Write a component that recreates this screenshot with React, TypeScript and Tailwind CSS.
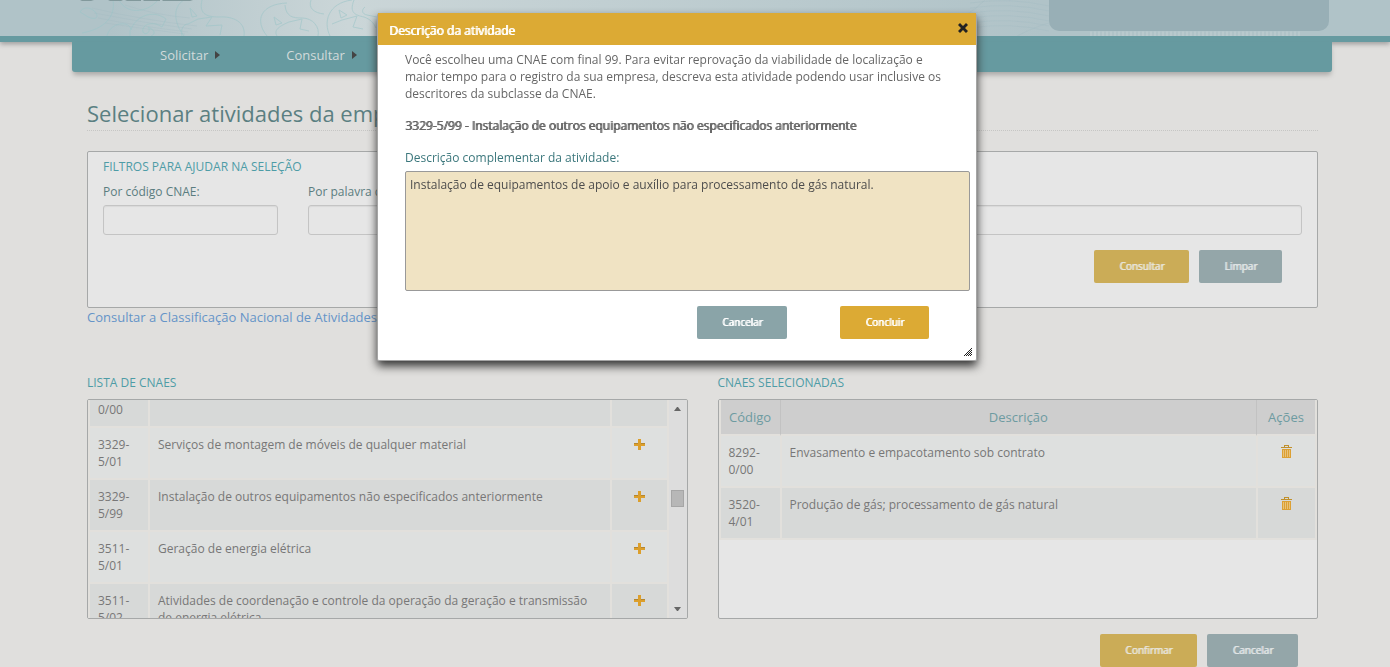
import React, { useState } from "react";
import { clsx } from "clsx";

interface Cnae {
  code: string;
  description: string;
}

const available: Cnae[] = [
  { code: "3329-5/01", description: "Serviços de montagem de móveis de qualquer material" },
  { code: "3329-5/99", description: "Instalação de outros equipamentos não especificados anteriormente" },
  { code: "3511-5/01", description: "Geração de energia elétrica" },
  {
    code: "3511-5/02",
    description: "Atividades de coordenação e controle da operação da geração e transmissão de energia elétrica",
  },
];

const selected: Cnae[] = [
  { code: "8292-0/00", description: "Envasamento e empacotamento sob contrato" },
  { code: "3520-4/01", description: "Produção de gás; processamento de gás natural" },
];

const cell = "border-b-2 border-l-2 border-[#e2e0dc] px-2 py-2 align-top";

const Button = ({ children, className }: { children: React.ReactNode; className: string }) => (
  <button
    type="button"
    className={clsx(
      "h-[33px] shrink-0 rounded-xs px-[25px] text-[10px] [text-shadow:1px_0_currentColor]",
      className
    )}
  >
    {children}
  </button>
);

const PlusIcon = () => (
  <svg width="11" height="11" viewBox="0 0 11 11" shapeRendering="crispEdges" aria-hidden="true">
    <path d="M4 0h3v4h4v3H7v4H4V7H0V4h4z" fill="#dc9f2c" />
    <path d="M0 4h4v1H0zM7 4h4v1H7z" fill="#b5862e" />
  </svg>
);

const TrashIcon = () => (
  <svg width="11" height="13" viewBox="0 0 11 13" shapeRendering="crispEdges" aria-hidden="true">
    <path d="M3 0h5v1H3zM3 1h1v1H3zM7 1h1v1H7zM0 2h11v1H0z" fill="#c0902c" />
    <path d="M1 4h9v9H1z" fill="#dca033" />
    <path d="M2 5h1v7H2zM4 5h1v7H4zM6 5h1v7H6zM8 5h1v7H8z" fill="#e8c27a" />
  </svg>
);

const HeaderArt = () => (
  <svg className="absolute inset-0 h-full w-full" viewBox="0 0 1390 36" preserveAspectRatio="none" aria-hidden="true">
    <g fill="none" stroke="#9dc6c9" strokeWidth="1" opacity="0.6">
      <path d="M80 12c3-6 12-5 16 1 4 8-6 6-11 2zM113 0c3 17-9 29-31 33M119 0c7 14 27 14 39 0M107 36c3-14 23-16 24-6 3-12 21-22 35-11l-4 8c-10-7-21-2-19 5 2 4 9 0 5-5 7 3 8 7 3 9M130 30v6" />
      <path d="M184 36c-10-13-12-29 0-36M190 8l7 8-5 1zM202 0c-3 13 3 17 17 17 14-1 27 5 25 19M182 36c-2-7 2-12 6-12l10-5 14-2-6 9 16-1-2 10" />
      <path d="M267 36c-13-16-6-32 20-33M274 17l8 6-6 2zM285 5c1 12 8 13 17 13 11 0 18 9 16 18M277 36c-3-5 0-9 12-14l13-3-2 10 9 2M311 0c-3 8 3 13 13 14" />
      <path d="M330 36c-7-14-2-33 22-36M339 10l8 5-6 3zM354 0c-5 13 1 15 10 17 6 2 10 6 12 11M332 24l10-4 15-4-4 11 10 2M365 7c-4 3-3 7 2 8l10 2" />
    </g>
    <g fill="none" stroke="#9bb9c0" strokeWidth="1" opacity="0.25">
      <path d="M92 8q50 12 105 18M94 13q50 10 98 16M98 18q40 8 90 14M105 23q40 6 80 11M125 5q30 10 65 13" />
      <path d="M970 3q40-6 79 3M970 8q40-6 79 3M970 13q40-6 79 3M970 18q40-6 79 3M970 23q40-6 79 3M970 28q40-6 79 3M985 0q-10 10-18 14M1017 36q20-10 32-13" />
    </g>
    <path d="M1090 34H1300" stroke="#c2d0d3" strokeWidth="5" strokeDasharray="2 2" opacity="0.5" />
    <path d="M80 0h14l-3 1H82zM108 0h15l-2 1h-11zM125 0h16v1h-14zM143 0h17v1h-16zM162 0h31l-3 1h-27z" fill="#82999c" />
  </svg>
);

const ActivityDialog = () => {
  const [text, setText] = useState(
    "Instalação de equipamentos de apoio e auxílio para processamento de gás natural."
  );

  return (
    <div className="fixed inset-x-0 top-0 flex justify-center pt-[13px] pr-9">
      <div
        role="dialog"
        aria-labelledby="dialog-title"
        className="relative w-[600px] rounded-xs border border-t-0 border-[#a5a5a5] bg-white shadow-[0_5px_10px_#333333]"
      >
        <div className="flex h-8 items-center justify-between bg-[#dcaa34] pt-[2px] pr-2 pl-[11px] text-white">
          <h2 id="dialog-title" className="[text-shadow:1px_0_currentColor]">
            Descrição da atividade
          </h2>
          <button type="button" title="Fechar" className="pb-1">
            <svg width="10" height="10" viewBox="0 0 10 10" aria-hidden="true">
              <path d="M2 0 5 3 8 0l2 2-3 3 3 3-2 2-3-3-3 3-2-2 3-3-3-3z" fill="#222222" />
            </svg>
          </button>
        </div>
        <div className="pt-[6px] pr-[6px] pl-[27px]">
          <p className="pr-5">
            Você escolheu uma CNAE com final 99. Para evitar reprovação da viabilidade de localização e maior tempo
            para o registro da sua empresa, descreva esta atividade podendo usar inclusive os descritores da
            subclasse da CNAE.
          </p>
          <p className="mt-[15px] [text-shadow:1px_0_currentColor]">
            3329-5/99 - Instalação de outros equipamentos não especificados anteriormente
          </p>
          <label htmlFor="complement" className="mt-[15px] block text-[#3b777c]">
            Descrição complementar da atividade:
          </label>
          <textarea
            id="complement"
            value={text}
            onChange={(e) => setText(e.target.value)}
            className="mt-[5px] block h-[120px] w-full resize-none rounded-xs border border-[#999999] bg-[#f0e3c3] px-1 py-1 text-[#4d4d4d] outline-none"
          />
          <div className="flex justify-end gap-[53px] pt-[15px] pr-[41px] pb-[21px]">
            <Button className="bg-[#8aa4a8] text-white">Cancelar</Button>
            <Button className="bg-[#dcaa34] text-white">Concluir</Button>
          </div>
        </div>
        <svg className="absolute right-1 bottom-1" width="8" height="8" viewBox="0 0 8 8" aria-hidden="true">
          <path d="M0 8 8 0M2 8 8 2M4 8 8 4M6 8 8 6" stroke="#222222" strokeWidth="1" />
        </svg>
      </div>
    </div>
  );
};

export default function App() {
  return (
    <div className="min-h-screen overflow-hidden bg-[#e0dfdd] font-['Open_Sans',sans-serif] text-[12px] leading-[17px] text-[#666666]">
      <header>
        <div className="relative flex h-9 justify-end bg-linear-to-r from-[#b0c3c8] from-8% via-[#cbd6d8] via-25% to-[#b0c3c8] to-75% pr-[61px]">
          <HeaderArt />
          <div className="relative h-[31px] w-[280px] rounded-b-[10px] bg-[#98afb6]" />
        </div>
        <div className="h-[6px] bg-[#669aa0] shadow-[0_2px_5px_#999999]" />
        <nav className="relative mr-[58px] ml-[72px] flex h-[30px] gap-[66px] rounded-b-[3px] bg-[#669aa0] pl-[88px] text-[13px] text-[#d2dbdb] shadow-[0_4px_5px_-1px_#aaa9a7]">
          {["Solicitar", "Consultar"].map((item) => (
            <a key={item} href="#" className="flex h-[26px] items-center gap-[7px]">
              {item}
              <svg width="5" height="8" viewBox="0 0 5 8" aria-hidden="true">
                <path d="M0 0 5 4 0 8z" fill="#444444" />
              </svg>
            </a>
          ))}
        </nav>
      </header>

      <main className="mr-[72px] ml-[87px]">
        <h1 className="mt-[27px] border-b border-dotted border-[#c6c6c4] pb-[3px] text-[22px] leading-7 text-[#5b7f82]">
          Selecionar atividades da empresa
        </h1>

        <section className="mt-5 rounded-xs border border-[#a6a8a8] bg-[#e6e6e6] px-[15px] pt-[6px] pb-6">
          <h2 className="text-[#4e9ca6]">FILTROS PARA AJUDAR NA SELEÇÃO</h2>
          <div className="mt-2 flex gap-[30px] text-[#5b7d80]">
            <div className="w-[175px]">
              <label htmlFor="code" className="block">
                Por código CNAE:
              </label>
              <input id="code" className="mt-[5px] block h-[30px] w-full rounded-[3px] border border-[#c4c4c4] px-2 shadow-[inset_0_1px_1px_#d9d9d9]" />
            </div>
            <div className="flex-1">
              <label htmlFor="keyword" className="block">
                Por palavra chave:
              </label>
              <input id="keyword" className="mt-[5px] block h-[30px] w-full rounded-[3px] border border-[#c4c4c4] px-2 shadow-[inset_0_1px_1px_#d9d9d9]" />
            </div>
          </div>
          <div className="mt-[15px] flex justify-end gap-[10px] pr-5">
            <Button className="bg-[#cbac57] text-[#e8e4da]">Consultar</Button>
            <Button className="bg-[#94a6a9] text-[#e1e5e6]">Limpar</Button>
          </div>
        </section>
        <a href="#" className="mt-px block text-[13px] text-[#6594c8]">
          Consultar a Classificação Nacional de Atividades Econômicas
        </a>

        <div className="mt-12 flex gap-[30px]">
          <section className="min-w-0 flex-1">
            <h2 className="text-[#4e9ca6]">LISTA DE CNAES</h2>
            <div className="mt-2 flex h-[220px] overflow-hidden rounded-xs border border-[#a6a8a8] bg-[#e2e0dc]">
              <table className="flex-1 table-fixed border-separate border-spacing-0 self-start border-r-2 border-[#e2e0dc] text-[#777777]">
                <colgroup>
                  <col className="w-[60px]" />
                  <col />
                  <col className="w-[57px]" />
                </colgroup>
                <tbody>
                  <tr className="bg-[#d7d9d8]">
                    <td className="border-b-2 border-l-2 border-[#e2e0dc] px-2 pt-px pb-2">0/00</td>
                    <td className={cell} />
                    <td className={cell} />
                  </tr>
                  {available.map(({ code, description }, i) => (
                    <tr key={code} className={i % 2 ? "bg-[#d7d9d8]" : "bg-[#dee0df]"}>
                      <td className={cell}>{code}</td>
                      <td className={cell}>{description}</td>
                      <td className={cell}>
                        <button type="button" title="Adicionar" className="mx-auto mt-[3px] block">
                          <PlusIcon />
                        </button>
                      </td>
                    </tr>
                  ))}
                </tbody>
              </table>
              <div className="flex w-[18px] shrink-0 flex-col items-center justify-between bg-[#dddddd] py-[7px]">
                <svg width="7" height="4" viewBox="0 0 7 4" aria-hidden="true">
                  <path d="M0 4 3 0h1l3 4z" fill="#666666" />
                </svg>
                <div className="mb-[21px] h-[17px] w-[13px] border border-[#a6a6a6] bg-[#b7b7b7]" />
                <svg width="7" height="4" viewBox="0 0 7 4" aria-hidden="true">
                  <path d="M0 0h7L4 4H3z" fill="#666666" />
                </svg>
              </div>
            </div>
          </section>

          <section className="min-w-0 flex-1">
            <h2 className="text-[#4e9ca6]">CNAES SELECIONADAS</h2>
            <div className="mt-2 h-[220px] overflow-hidden rounded-xs border border-[#a6a8a8] bg-[#e6e6e6]">
              <table className="w-full table-fixed border-separate border-spacing-0 border-r-2 border-[#e2e0dc] text-[#777777]">
                <colgroup>
                  <col className="w-[61px]" />
                  <col />
                  <col className="w-[59px]" />
                </colgroup>
                <thead>
                  <tr className="h-9 bg-[#cecece] text-[13px] text-[#6d9ba1]">
                    <th className="border-b-2 border-l-2 border-[#e2e0dc] font-normal">Código</th>
                    <th className="border-b-2 border-b-[#e2e0dc] border-l border-l-[#c2c2c2] font-normal">Descrição</th>
                    <th className="border-b-2 border-b-[#e2e0dc] border-l border-l-[#c2c2c2] font-normal">Ações</th>
                  </tr>
                </thead>
                <tbody>
                  {selected.map(({ code, description }, i) => (
                    <tr key={code} className={i % 2 ? "bg-[#d7d9d8]" : "bg-[#dee0df]"}>
                      <td className={cell}>{code}</td>
                      <td className={cell}>{description}</td>
                      <td className={cell}>
                        <button type="button" title="Excluir" className="mx-auto mt-px block">
                          <TrashIcon />
                        </button>
                      </td>
                    </tr>
                  ))}
                </tbody>
              </table>
            </div>
          </section>
        </div>

        <div className="mt-[15px] flex justify-end gap-[10px] pr-5">
          <Button className="bg-[#cbac57] text-[#e8e4da]">Confirmar</Button>
          <Button className="bg-[#94a6a9] text-[#e1e5e6]">Cancelar</Button>
        </div>
      </main>

      <ActivityDialog />
    </div>
  );
}
